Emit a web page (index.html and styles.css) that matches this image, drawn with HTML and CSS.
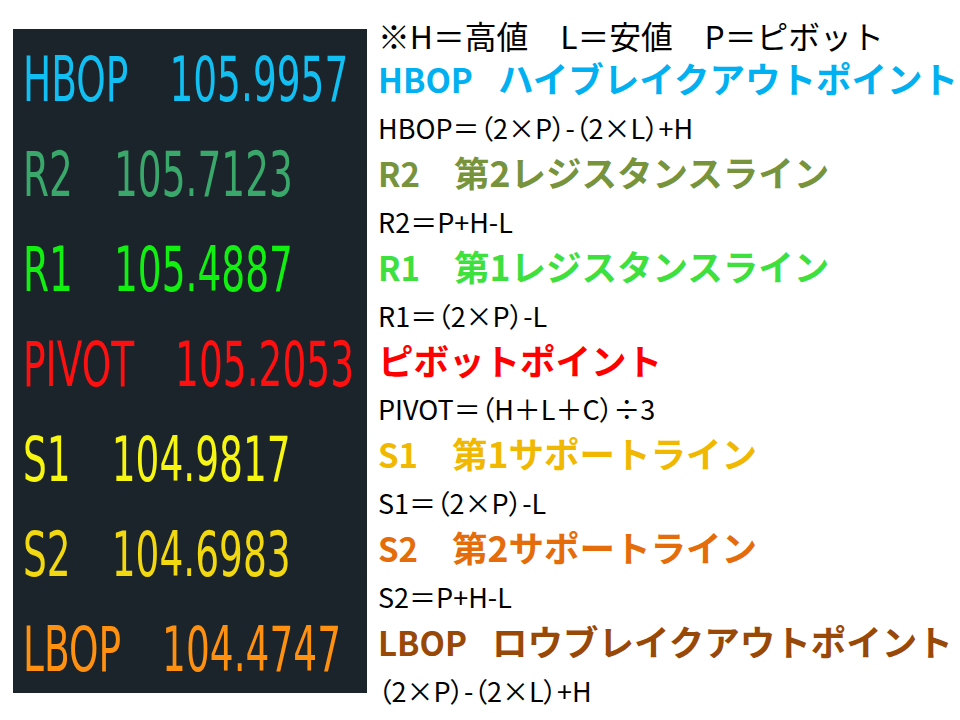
FILE: index.html
```html
<!DOCTYPE html>
<html lang="ja">
<head>
<meta charset="utf-8">
<title>Pivot points</title>
<link rel="stylesheet" href="styles.css">
</head>
<body>
<div class="page">
  <div class="panel">
    <div class="row c-hbop"><span class="lbl">HBOP</span><span class="val">105.9957</span></div>
    <div class="row c-r2"><span class="lbl">R2</span><span class="val">105.7123</span></div>
    <div class="row c-r1"><span class="lbl">R1</span><span class="val">105.4887</span></div>
    <div class="row c-pivot"><span class="lbl">PIVOT</span><span class="val">105.2053</span></div>
    <div class="row c-s1"><span class="lbl">S1</span><span class="val">104.9817</span></div>
    <div class="row c-s2"><span class="lbl">S2</span><span class="val">104.6983</span></div>
    <div class="row c-lbop"><span class="lbl">LBOP</span><span class="val">104.4747</span></div>
  </div>
  <div class="legend">
    <div class="note">※H＝高値　L＝安値　P＝ピボット</div>
    <div class="head h-hbop"><span class="tag">HBOP</span>ハイブレイクアウトポイント</div>
    <div class="formula">HBOP＝（2×P）-（2×L）+H</div>
    <div class="head h-r2"><span class="tag tag-wide">R2</span>第2レジスタンスライン</div>
    <div class="formula">R2＝P+H-L</div>
    <div class="head h-r1"><span class="tag tag-wide">R1</span>第1レジスタンスライン</div>
    <div class="formula">R1＝（2×P）-L</div>
    <div class="head h-pivot">ピボットポイント</div>
    <div class="formula">PIVOT＝（H＋L＋C）÷3</div>
    <div class="head h-s1"><span class="tag tag-wide">S1</span>第1サポートライン</div>
    <div class="formula">S1＝（2×P）-L</div>
    <div class="head h-s2"><span class="tag tag-wide">S2</span>第2サポートライン</div>
    <div class="formula">S2＝P+H-L</div>
    <div class="head h-lbop"><span class="tag">LBOP</span>ロウブレイクアウトポイント</div>
    <div class="formula">（2×P）-（2×L）+H</div>
  </div>
</div>
</body>
</html>
```
FILE: styles.css
```css
html, body {
  margin: 0;
  padding: 0;
  background: #ffffff;
}

.page {
  display: flex;
  align-items: flex-start;
  width: 960px;
  height: 720px;
  overflow: hidden;
}

.panel {
  flex-shrink: 0;
  margin: 29px 0 0 13px;
  width: 354px;
  height: 664px;
  background: #1b242b;
  padding: 4px 0 0 10px;
  box-sizing: border-box;
  font-family: "DejaVu Sans", sans-serif;
  font-size: 37.5px;
}

.row {
  display: flex;
  gap: 41px;
  height: 95px;
  line-height: 95px;
  white-space: nowrap;
  transform: scaleY(1.66);
  transform-origin: 0 50%;
}

.c-hbop { color: #12bff2; }
.c-r2 { color: #3aa86a; }
.c-r1 { color: #12f012; }
.c-pivot { color: #ff1010; }
.c-s1 { color: #f6f612; }
.c-s2 { color: #f2d810; }
.c-lbop { color: #ff9010; }

.legend {
  flex-shrink: 0;
  margin-left: 11px;
  padding-top: 14px;
  font-family: "Noto Sans CJK JP", sans-serif;
  color: #000;
  white-space: nowrap;
}

.note {
  font-size: 31.8px;
  line-height: 42px;
}

.head {
  font-size: 35.5px;
  font-weight: bold;
  line-height: 44px;
}

.tag {
  display: inline-block;
  font-size: 33px;
  margin-right: 25px;
}

.tag-wide {
  margin-right: 34px;
}

.formula {
  font-size: 27px;
  line-height: 44px;
  padding-top: 5px;
  font-feature-settings: "palt";
}

.h-hbop { color: #00b0f0; }
.h-r2 { color: #77933c; }
.h-r1 { color: #3ee03e; }
.h-pivot { color: #ff0000; }
.h-s1 { color: #f0b800; }
.h-s2 { color: #e46c0a; }
.h-lbop { color: #984807; }
```
